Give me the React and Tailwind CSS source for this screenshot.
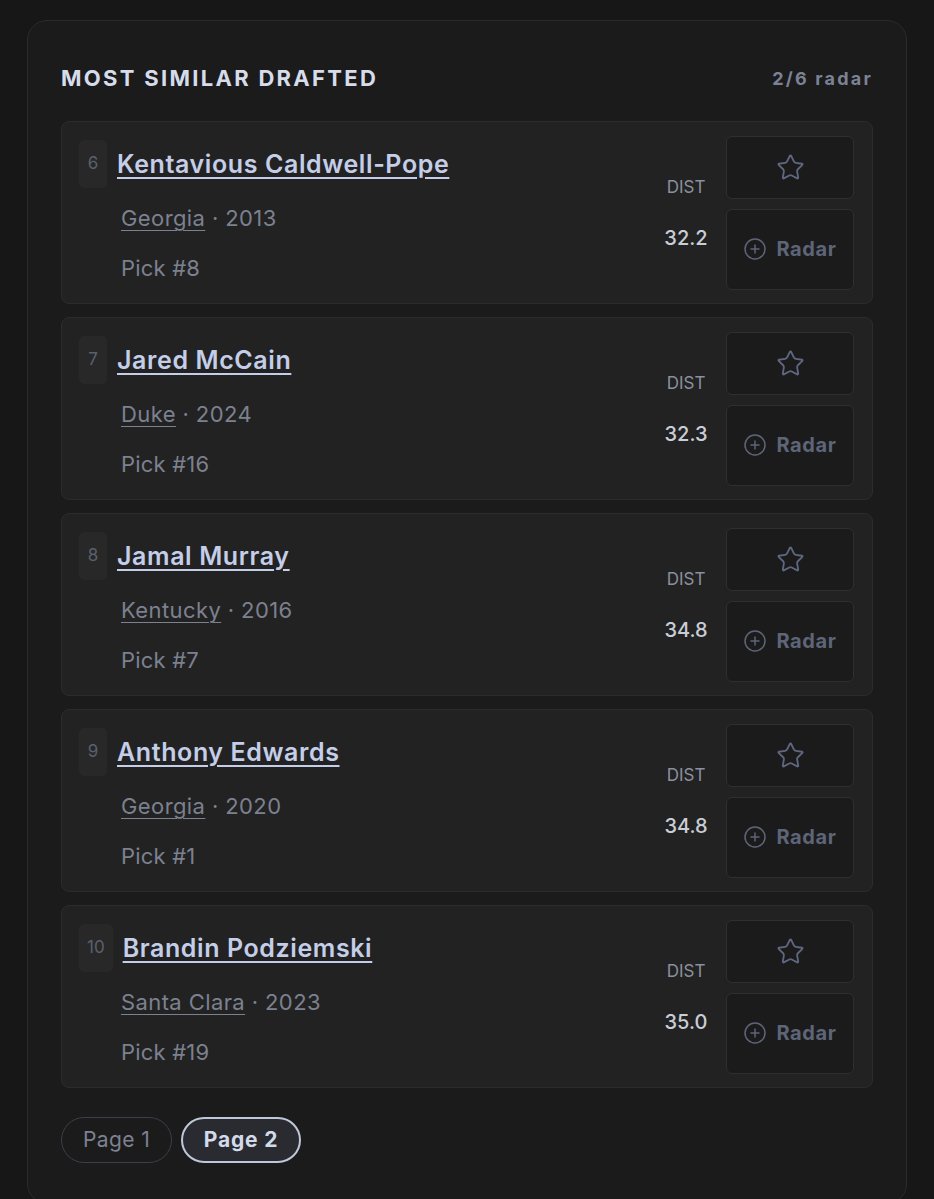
import React from 'react';
import { Star, CirclePlus } from 'lucide-react';

const players = [
  { rank: 6, name: 'Kentavious Caldwell-Pope', school: 'Georgia', year: 2013, pick: 8, dist: '32.2' },
  { rank: 7, name: 'Jared McCain', school: 'Duke', year: 2024, pick: 16, dist: '32.3' },
  { rank: 8, name: 'Jamal Murray', school: 'Kentucky', year: 2016, pick: 7, dist: '34.8' },
  { rank: 9, name: 'Anthony Edwards', school: 'Georgia', year: 2020, pick: 1, dist: '34.8' },
  { rank: 10, name: 'Brandin Podziemski', school: 'Santa Clara', year: 2023, pick: 19, dist: '35.0' },
];

function PlayerRow({ p }) {
  return (
    <div className="flex h-[183px] rounded-[8px] border border-[#2c2c2c] bg-[#222222]">
      <div className="flex-1 pl-[17px] pt-[18px]">
        <div className="flex items-center gap-[10px]">
          <div className="flex h-[48px] min-w-[28px] items-center justify-center rounded-[5px] bg-[#282828] px-[8px] text-[17px] text-[#5b606c]">
            {p.rank}
          </div>
          <a className="text-[25px] font-semibold leading-[32px] tracking-[0.6px] text-[#c4cee8] underline decoration-[2px] underline-offset-[4px]">
            {p.name}
          </a>
        </div>
        <div className="ml-[42px] mt-[16px] text-[22px] leading-[28px] tracking-[0.4px] text-[#7c8190]">
          <span className="underline decoration-[1px] underline-offset-[4px]">{p.school}</span>
          <span> · {p.year}</span>
        </div>
        <div className="ml-[42px] mt-[22px] text-[22px] leading-[28px] tracking-[0.2px] text-[#7c8190]">Pick #{p.pick}</div>
      </div>
      <div className="flex items-center">
        <div className="mr-[15px] flex w-[50px] flex-col items-center">
          <div className="text-[17px] leading-[20px] text-[#8a909d]">DIST</div>
          <div className="mt-[30px] text-[20px] font-medium leading-[22px] text-[#c9cdd6]">{p.dist}</div>
        </div>
        <div className="mr-[18px] flex flex-col gap-[10px]">
          <button className="flex h-[63px] w-[128px] items-center justify-center rounded-[6px] border border-[#2f2f2f] bg-[#1b1b1b]">
            <Star size={29} strokeWidth={1.5} className="text-[#5f6780]" />
          </button>
          <button className="flex h-[81px] w-[128px] items-center justify-center gap-[9px] rounded-[6px] border border-[#2f2f2f] bg-[#1b1b1b] text-[20px] font-bold tracking-[0.6px] text-[#5e6578]">
            <CirclePlus size={24} strokeWidth={1.5} />
            Radar
          </button>
        </div>
      </div>
    </div>
  );
}

export default function App() {
  return (
    <div className="min-h-screen bg-[#171717] px-[27px] pt-[20px]" style={{ fontFamily: 'Inter, sans-serif' }}>
      <div className="rounded-t-[20px] rounded-b-[20px] border border-[#2b2b2b] bg-[#1b1b1c] px-[33px] pb-[40px] pt-[43px]">
        <div className="flex h-[28px] items-center justify-between">
          <h2 className="text-[22px] font-bold tracking-[2.3px] text-[#d7dceb]">MOST SIMILAR DRAFTED</h2>
          <span className="text-[18px] font-bold tracking-[2.2px] text-[#7b8294]">2/6 radar</span>
        </div>
        <div className="mt-[29px] flex flex-col gap-[13px]">
          {players.map((p) => (
            <PlayerRow key={p.rank} p={p} />
          ))}
        </div>
        <div className="mt-[29px] flex gap-[9px]">
          <button className="h-[46px] w-[111px] rounded-full border border-[#3a3f4a] text-[21px] tracking-[0.4px] text-[#7d8290]">Page 1</button>
          <button className="h-[46px] w-[120px] rounded-full border-2 border-[#bfc7d9] bg-[#2a2b30] text-[21px] font-bold tracking-[0.8px] text-[#d3daea]">Page 2</button>
        </div>
      </div>
    </div>
  );
}
